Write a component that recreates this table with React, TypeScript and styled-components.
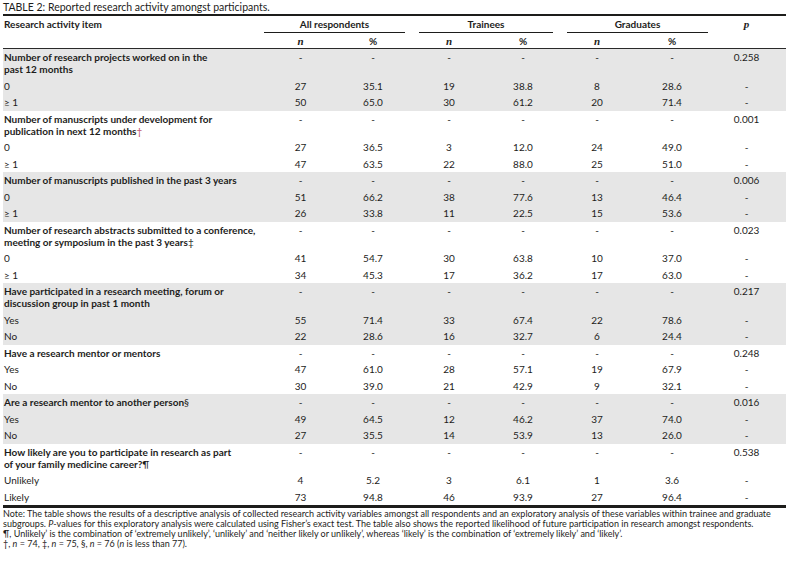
import React from "react";
import styled, { createGlobalStyle } from "styled-components";

const GlobalStyle = createGlobalStyle`
  html, body { margin: 0; padding: 0; background: #ffffff; }
  body {
    font-family: Lato, "Open Sans", sans-serif;
    color: #1d1d1b;
  }
`;

const COLS = "261px 73px 72px 80px 68px 80px 70px 79px";

const Page = styled.div`
  width: 783px;
  padding: 0 3px;
`;

const Caption = styled.div`
  font-size: 10.5px;
  line-height: 13px;
  padding-top: 1px;
  border-bottom: 2px solid #1d1d1b;
`;

const Head = styled.div`
  display: grid;
  grid-template-columns: ${COLS};
  border-bottom: 1px solid #2a2a2a;
  font-weight: 700;
  font-size: 10px;
`;

const HeadCell = styled.div<{ $row?: number; $align?: string }>`
  grid-row: ${(p) => p.$row ?? 1};
  text-align: ${(p) => p.$align ?? "center"};
  line-height: 12px;
  height: 12px;
  padding: ${(p) => (p.$row === 2 ? "1.5px 1px" : "2px 1px")};
`;

const GroupCell = styled.div<{ $inL: number; $inR: number }>`
  grid-column: span 2;
  grid-row: 1;
  text-align: center;
  line-height: 12px;
  height: 12px;
  padding: 2px 0;
  margin: 0 ${(p) => p.$inR}px 0 ${(p) => p.$inL}px;
  border-bottom: 1px solid #1d1d1b;
`;

const Stat = styled.span`
  font-family: "Liberation Serif", serif;
  font-style: italic;
  font-weight: 700;
  font-size: 11px;
  line-height: 0;
`;

const Group = styled.div<{ $shade: boolean }>`
  background: ${(p) => (p.$shade ? "#e6e6e6" : "#ffffff")};
`;

const Row = styled.div`
  display: grid;
  grid-template-columns: ${COLS};
  font-size: 10px;
  line-height: 12px;
`;

const Label = styled.div<{ $bold?: boolean }>`
  padding: 2.25px 1px;
  font-weight: ${(p) => (p.$bold ? 700 : 400)};
  white-space: nowrap;
`;

const Num = styled.div`
  padding: 2.25px 0;
  text-align: center;
`;

const Mark = styled.span<{ $tint?: boolean }>`
  font-weight: 400;
  color: ${(p) => (p.$tint ? "#c0506a" : "inherit")};
`;

const BottomRule = styled.div`
  border-top: 3px solid #1d1d1b;
`;

const Notes = styled.div`
  padding-top: 0.5px;
  font-size: 9px;
  line-height: 10px;
  white-space: nowrap;
`;

const NoteLine = styled.p`
  margin: 0;
`;

type G = {
  title: React.ReactNode;
  p: string;
  rows: string[][];
};

const groups: G[] = [
  {
    title: (
      <>
        Number of research projects worked on in the
        <br />
        past 12 months
      </>
    ),
    p: "0.258",
    rows: [
      ["0", "27", "35.1", "19", "38.8", "8", "28.6"],
      ["≥ 1", "50", "65.0", "30", "61.2", "20", "71.4"],
    ],
  },
  {
    title: (
      <>
        Number of manuscripts under development for
        <br />
        publication in next 12 months<Mark $tint>†</Mark>
      </>
    ),
    p: "0.001",
    rows: [
      ["0", "27", "36.5", "3", "12.0", "24", "49.0"],
      ["≥ 1", "47", "63.5", "22", "88.0", "25", "51.0"],
    ],
  },
  {
    title: <>Number of manuscripts published in the past 3 years</>,
    p: "0.006",
    rows: [
      ["0", "51", "66.2", "38", "77.6", "13", "46.4"],
      ["≥ 1", "26", "33.8", "11", "22.5", "15", "53.6"],
    ],
  },
  {
    title: (
      <>
        Number of research abstracts submitted to a conference,
        <br />
        meeting or symposium in the past 3 years<Mark>‡</Mark>
      </>
    ),
    p: "0.023",
    rows: [
      ["0", "41", "54.7", "30", "63.8", "10", "37.0"],
      ["≥ 1", "34", "45.3", "17", "36.2", "17", "63.0"],
    ],
  },
  {
    title: (
      <>
        Have participated in a research meeting, forum or
        <br />
        discussion group in past 1 month
      </>
    ),
    p: "0.217",
    rows: [
      ["Yes", "55", "71.4", "33", "67.4", "22", "78.6"],
      ["No", "22", "28.6", "16", "32.7", "6", "24.4"],
    ],
  },
  {
    title: <>Have a research mentor or mentors</>,
    p: "0.248",
    rows: [
      ["Yes", "47", "61.0", "28", "57.1", "19", "67.9"],
      ["No", "30", "39.0", "21", "42.9", "9", "32.1"],
    ],
  },
  {
    title: (
      <>
        Are a research mentor to another person<Mark>§</Mark>
      </>
    ),
    p: "0.016",
    rows: [
      ["Yes", "49", "64.5", "12", "46.2", "37", "74.0"],
      ["No", "27", "35.5", "14", "53.9", "13", "26.0"],
    ],
  },
  {
    title: (
      <>
        How likely are you to participate in research as part
        <br />
        of your family medicine career?<Mark>¶</Mark>
      </>
    ),
    p: "0.538",
    rows: [
      ["Unlikely", "4", "5.2", "3", "6.1", "1", "3.6"],
      ["Likely", "73", "94.8", "46", "93.9", "27", "96.4"],
    ],
  },
];

export default function App() {
  return (
    <Page>
      <GlobalStyle />
      <Caption>TABLE 2: Reported research activity amongst participants.</Caption>
      <Head>
        <HeadCell $align="left" $row={1}>
          Research activity item
        </HeadCell>
        <GroupCell $inL={0} $inR={4}>All respondents</GroupCell>
        <GroupCell $inL={10} $inR={4}>Trainees</GroupCell>
        <GroupCell $inL={10} $inR={-1}>Graduates</GroupCell>
        <HeadCell $row={1}>
          <Stat>p</Stat>
        </HeadCell>
        <HeadCell $row={2} />
        <HeadCell $row={2}>
          <Stat>n</Stat>
        </HeadCell>
        <HeadCell $row={2}>%</HeadCell>
        <HeadCell $row={2}>
          <Stat>n</Stat>
        </HeadCell>
        <HeadCell $row={2}>%</HeadCell>
        <HeadCell $row={2}>
          <Stat>n</Stat>
        </HeadCell>
        <HeadCell $row={2}>%</HeadCell>
        <HeadCell $row={2} />
      </Head>
      {groups.map((g, i) => (
        <Group key={i} $shade={i % 2 === 0}>
          <Row>
            <Label $bold>{g.title}</Label>
            <Num>-</Num>
            <Num>-</Num>
            <Num>-</Num>
            <Num>-</Num>
            <Num>-</Num>
            <Num>-</Num>
            <Num>{g.p}</Num>
          </Row>
          {g.rows.map((r, j) => (
            <Row key={j}>
              <Label>{r[0]}</Label>
              {r.slice(1).map((v, k) => (
                <Num key={k}>{v}</Num>
              ))}
              <Num>-</Num>
            </Row>
          ))}
        </Group>
      ))}
      <BottomRule />
      <Notes>
        <NoteLine>
          Note: The table shows the results of a descriptive analysis of collected research activity variables amongst all
          respondents and an exploratory analysis of these variables within trainee and graduate
          <br />
          subgroups. <i>P</i>-values for this exploratory analysis were calculated using Fisher’s exact test. The table also
          shows the reported likelihood of future participation in research amongst respondents.
        </NoteLine>
        <NoteLine>
          ¶, Unlikely’ is the combination of ‘extremely unlikely’, ‘unlikely’ and ‘neither likely or unlikely’, whereas
          ‘likely’ is the combination of ‘extremely likely’ and ‘likely’.
        </NoteLine>
        <NoteLine>
          †, <i>n</i> = 74, ‡, <i>n</i> = 75, §, <i>n</i> = 76 (<i>n</i> is less than 77).
        </NoteLine>
      </Notes>
    </Page>
  );
}
